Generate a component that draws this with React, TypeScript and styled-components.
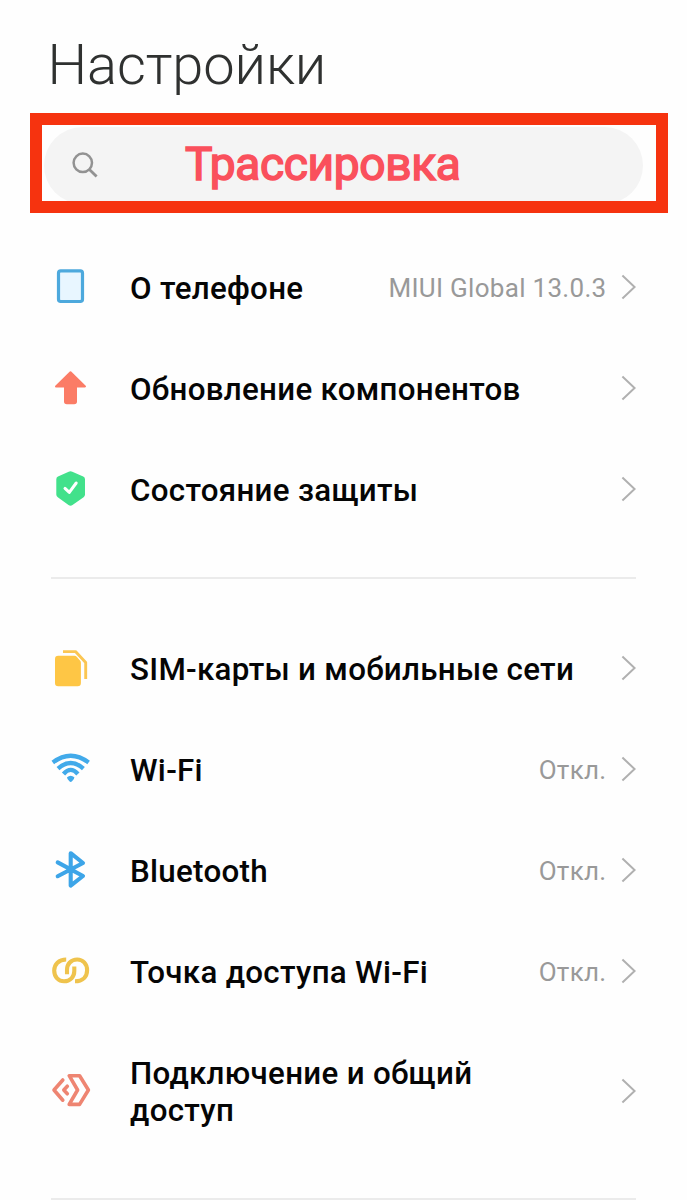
import React from 'react';
import styled, { createGlobalStyle } from 'styled-components';

const GlobalStyle = createGlobalStyle`
  *, *::before, *::after { box-sizing: border-box; }
  body { margin: 0; background: #fefefe; font-family: Roboto, "Noto Sans", sans-serif; }
`;

const Screen = styled.main`
  width: 687px;
  height: 1200px;
  overflow: hidden;
  background: #fefefe;
`;

const Title = styled.h1`
  margin: 0;
  padding: 32px 0 0 47.5px;
  height: 113px;
  font-size: 56px;
  line-height: 66px;
  font-weight: 300;
  letter-spacing: -0.1px;
  color: #2f3130;
  white-space: nowrap;
`;

const SearchFrame = styled.div`
  width: 638px;
  height: 100px;
  margin-left: 30px;
  padding: 1.5px 0 0 2px;
  border: 12px solid #f6330f;
  background: #fefefe;
  overflow: hidden;
`;

const SearchPill = styled.div`
  display: flex;
  align-items: center;
  width: 599px;
  height: 77px;
  padding-left: 27px;
  border-radius: 39px;
  background: #f4f4f4;
`;

const SearchText = styled.span`
  margin: -3px 0 0 85px;
  font-size: 46px;
  line-height: 54px;
  font-weight: 400;
  letter-spacing: -0.3px;
  -webkit-text-stroke: 1.6px #fa505c;
  color: #fa505c;
  white-space: nowrap;
`;

const Group = styled.section<{ $top: number }>`
  padding: ${({ $top }) => $top}px 51px 37px 50px;
`;

const Row = styled.div<{ $tall?: boolean }>`
  display: flex;
  align-items: center;
  height: ${({ $tall }) => ($tall ? 139 : 101)}px;
`;

const IconBox = styled.svg`
  flex: none;
  width: 41px;
  height: 41px;
  margin-right: 39px;
`;

const Label = styled.span<{ $tall?: boolean }>`
  flex: 1;
  padding-top: ${({ $tall }) => ($tall ? 0 : 2)}px;
  font-size: 31.3px;
  line-height: 37px;
  font-weight: 500;
  letter-spacing: 0.3px;
  color: #050505;
  white-space: pre-line;
`;

const Value = styled.span`
  padding-top: 1px;
  font-size: 26px;
  line-height: 30px;
  letter-spacing: 0.3px;
  color: #999;
  white-space: nowrap;
`;

const Chevron = styled.svg`
  flex: none;
  width: 15px;
  height: 26px;
  margin: 0 0 2px 14.5px;
`;

const Divider = styled.hr`
  height: 2px;
  margin: 0 51px;
  border: 0;
  background: #ebebeb;
`;

const line = { fill: 'none', strokeLinecap: 'round', strokeLinejoin: 'round' } as const;

const icons = {
  phone: <rect x="8.5" y="3.9" width="24" height="30.6" rx="2.2" fill="#e8f6ff" stroke="#4da9dd" strokeWidth="3.2" />,
  update: (
    <path d="M20.5 4.2L35 18.4H26V33.5Q26 35.3 24.2 35.3H16.8Q15 35.3 15 33.5V18.4H6Z" fill="#fb7c66" stroke="#fb7c66" strokeWidth="2" strokeLinejoin="round" />
  ),
  shield: (
    <>
      <path d="M18.7 2.7Q20.5 1.8 22.3 2.7L33.2 7.5Q35 8.3 35 10.2V25.5Q35 27.2 33.6 28.3L22.5 36Q20.5 37.3 18.5 36L7.8 28.3Q6.3 27.2 6.3 25.5V10.2Q6.3 8.3 8 7.5Z" fill="#42e18b" />
      <path {...line} d="M15 19.4L19.3 23.4L26.2 14" stroke="#fff" strokeWidth="3" />
    </>
  ),
  sim: (
    <>
      <path d="M8.2 7.7H24.5Q25.8 7.7 26.7 8.7L30 12.4Q30.9 13.4 30.9 14.8V35Q30.9 38.3 27.6 38.3H8.2Q5 38.3 5 35V11Q5 7.7 8.2 7.7Z" fill="#fec645" />
      <path {...line} strokeLinecap="butt" d="M13 3.6H25.5L35.7 14.4V31" stroke="#fbc653" strokeWidth="2.9" />
    </>
  ),
  wifi: (
    <>
      <g {...line} strokeLinecap="butt" stroke="#42aaea" strokeWidth="4.3">
        <path d="M2.8 13.5Q20.7 0 38.6 13.5" />
        <path d="M8 19.6Q20.7 8.2 33.4 19.6" />
        <path d="M13.5 25Q20.7 16.6 27.9 25" />
      </g>
      <path d="M17 28.2Q20.7 25.1 24.4 28.2Q24.4 30.3 22 32.3Q20.7 33.6 19.4 32.3Q17 30.3 17 28.2Z" fill="#42aaea" />
    </>
  ),
  bluetooth: <path {...line} d="M7.7 12.4L33 26L20.7 35.6V3.2L33 13L7.7 26.2" stroke="#3da5e8" strokeWidth="4.1" />,
  hotspot: (
    <g {...line} strokeLinecap="butt" stroke="#efc34d" strokeWidth="4.1">
      <path d="M16.2 8.5C8.8 8.5 4.2 13.2 4.2 19.6C4.2 26.2 8.6 30.3 14 30.3C20.3 30.3 24.3 25.8 24.3 20V15.5" />
      <path d="M25 30.3C32.5 30.3 37.1 25.8 37.1 19.2C37.1 12.6 32.7 8.5 27.2 8.5C21 8.5 17 13 17 18.8V23.3" />
    </g>
  ),
  share: (
    <g {...line} stroke="#ee8572" strokeWidth="3.6">
      <path d="M19.2 4.7H29.6L38.4 19L29.6 33.4H19.2L27.6 19Z" />
      <path d="M12.8 9L4 19L12.8 29.2" />
      <path d="M17.3 15.2L13.8 19L17.3 22.8" />
    </g>
  ),
};

type Item = { icon: keyof typeof icons; label: string; value?: string; tall?: boolean };

const device: Item[] = [
  { icon: 'phone', label: 'О телефоне', value: 'MIUI Global 13.0.3' },
  { icon: 'update', label: 'Обновление компонентов' },
  { icon: 'shield', label: 'Состояние защиты' },
];

const network: Item[] = [
  { icon: 'sim', label: 'SIM-карты и мобильные сети' },
  { icon: 'wifi', label: 'Wi-Fi', value: 'Откл.' },
  { icon: 'bluetooth', label: 'Bluetooth', value: 'Откл.' },
  { icon: 'hotspot', label: 'Точка доступа Wi-Fi', value: 'Откл.' },
  { icon: 'share', label: 'Подключение и общий\nдоступ', tall: true },
];

const SettingRow = ({ icon, label, value, tall }: Item) => (
  <Row $tall={tall}>
    <IconBox viewBox="0 0 41 41">{icons[icon]}</IconBox>
    <Label $tall={tall}>{label}</Label>
    {value && <Value>{value}</Value>}
    <Chevron viewBox="0 0 15 26">
      <path d="M1.4 1.6L13.6 13L1.4 24.4" fill="none" stroke="#b0b0b0" strokeWidth="2" />
    </Chevron>
  </Row>
);

export default function App() {
  return (
    <>
      <GlobalStyle />
      <Screen>
        <Title>Настройки</Title>
        <SearchFrame>
          <SearchPill>
            <svg width="29" height="29" viewBox="0 0 29 29">
              <circle cx="11.8" cy="11.8" r="9.2" fill="none" stroke="#929292" strokeWidth="2.5" />
              <path d="M18.4 18.4L25.6 25.6" stroke="#929292" strokeWidth="2.8" />
            </svg>
            <SearchText>Трассировка</SearchText>
          </SearchPill>
        </SearchFrame>
        <Group $top={24}>
          {device.map((item) => (
            <SettingRow key={item.icon} {...item} />
          ))}
        </Group>
        <Divider />
        <Group $top={39}>
          {network.map((item) => (
            <SettingRow key={item.icon} {...item} />
          ))}
        </Group>
        <Divider />
      </Screen>
    </>
  );
}
